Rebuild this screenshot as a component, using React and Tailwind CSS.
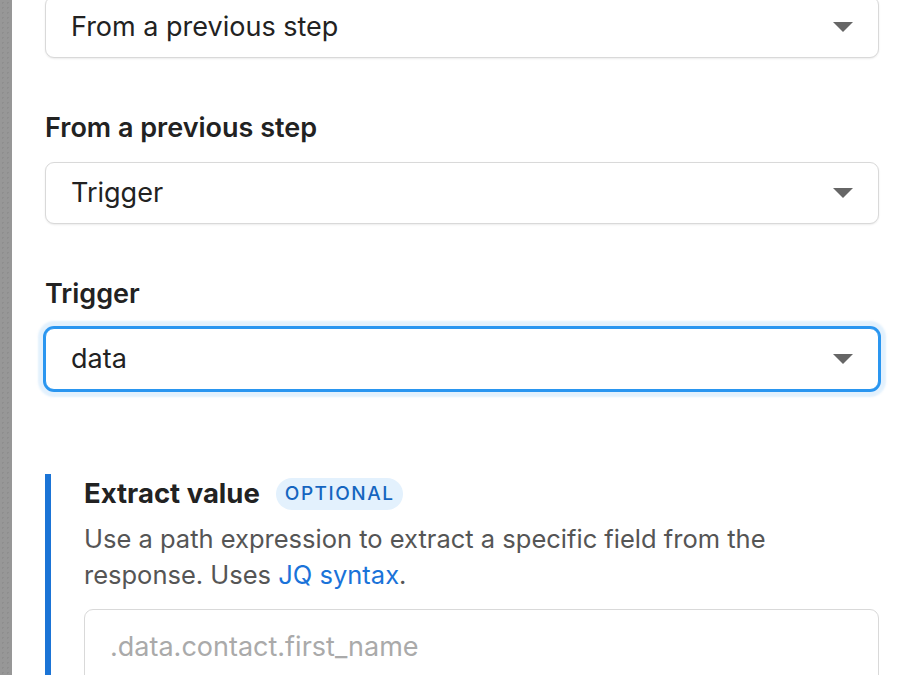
const Caret = () => (
  <svg width="20" height="10" viewBox="0 0 20 10" className="shrink-0">
    <path d="M0 0h20L10 10z" fill="#666" />
  </svg>
)

const SelectBox = ({ value, focused }) => (
  <div
    className={
      focused
        ? "h-[62px] flex items-center justify-between pl-[25px] pr-[25px] bg-white rounded-[9px] border border-[#2a96f0] shadow-[0_0_0_2px_#2a96f0,0_0_2px_7px_rgba(42,150,240,0.13)]"
        : "h-[62px] flex items-center justify-between pl-[25px] pr-[25px] bg-white rounded-[9px] border border-[#d9d9d9] shadow-[0_1px_2px_rgba(0,0,0,0.08)]"
    }
  >
    <span className="text-[27px] text-[#222]">{value}</span>
    <Caret />
  </div>
)

const Field = ({ label, value, focused }) => (
  <div className="flex flex-col">
    <label className="text-[27px] leading-[36px] font-semibold text-[#222] mb-4">{label}</label>
    <SelectBox value={value} focused={focused} />
  </div>
)

export default function App() {
  return (
    <div className="flex h-[675px] w-[912px] overflow-hidden font-['Inter',sans-serif]">
      {/* canvas edge */}
      <div className="w-3 shrink-0 bg-[#979797] bg-[radial-gradient(#8e8e8e_1px,transparent_1px)] bg-[length:5px_5px]" />

      {/* side panel */}
      <div className="flex-1 bg-white px-[33px] -mt-1">
        <SelectBox value="From a previous step" />

        <div className="mt-[52px]">
          <Field label="From a previous step" value="Trigger" />
        </div>

        <div className="mt-[52px]">
          <Field label="Trigger" value="data" focused />
        </div>

        {/* extract value */}
        <div className="mt-[84px] border-l-[6px] border-[#1b74d6] pl-[33px]">
          <div className="h-10 flex items-center gap-4">
            <h3 className="text-[27.5px] font-bold text-[#222]">Extract value</h3>
            <span className="h-8 flex items-center px-[9px] rounded-full bg-[#e3f1fd] text-[19px] font-medium tracking-[0.08em] text-[#1565c0]">
              OPTIONAL
            </span>
          </div>
          <p className="mt-[7px] text-[25.5px] leading-[36px] text-[#555] max-w-[740px]">
            Use a path expression to extract a specific field from the response. Uses{" "}
            <a className="text-[#1a73d9]">JQ syntax</a>.
          </p>
          <div className="mt-4 h-[120px] rounded-[9px] border border-[#d9d9d9] bg-white pl-[25px] pt-[19px]">
            <span className="text-[27px] leading-[36px] text-[#aaa]">.data.contact.first_name</span>
          </div>
        </div>
      </div>
    </div>
  )
}
